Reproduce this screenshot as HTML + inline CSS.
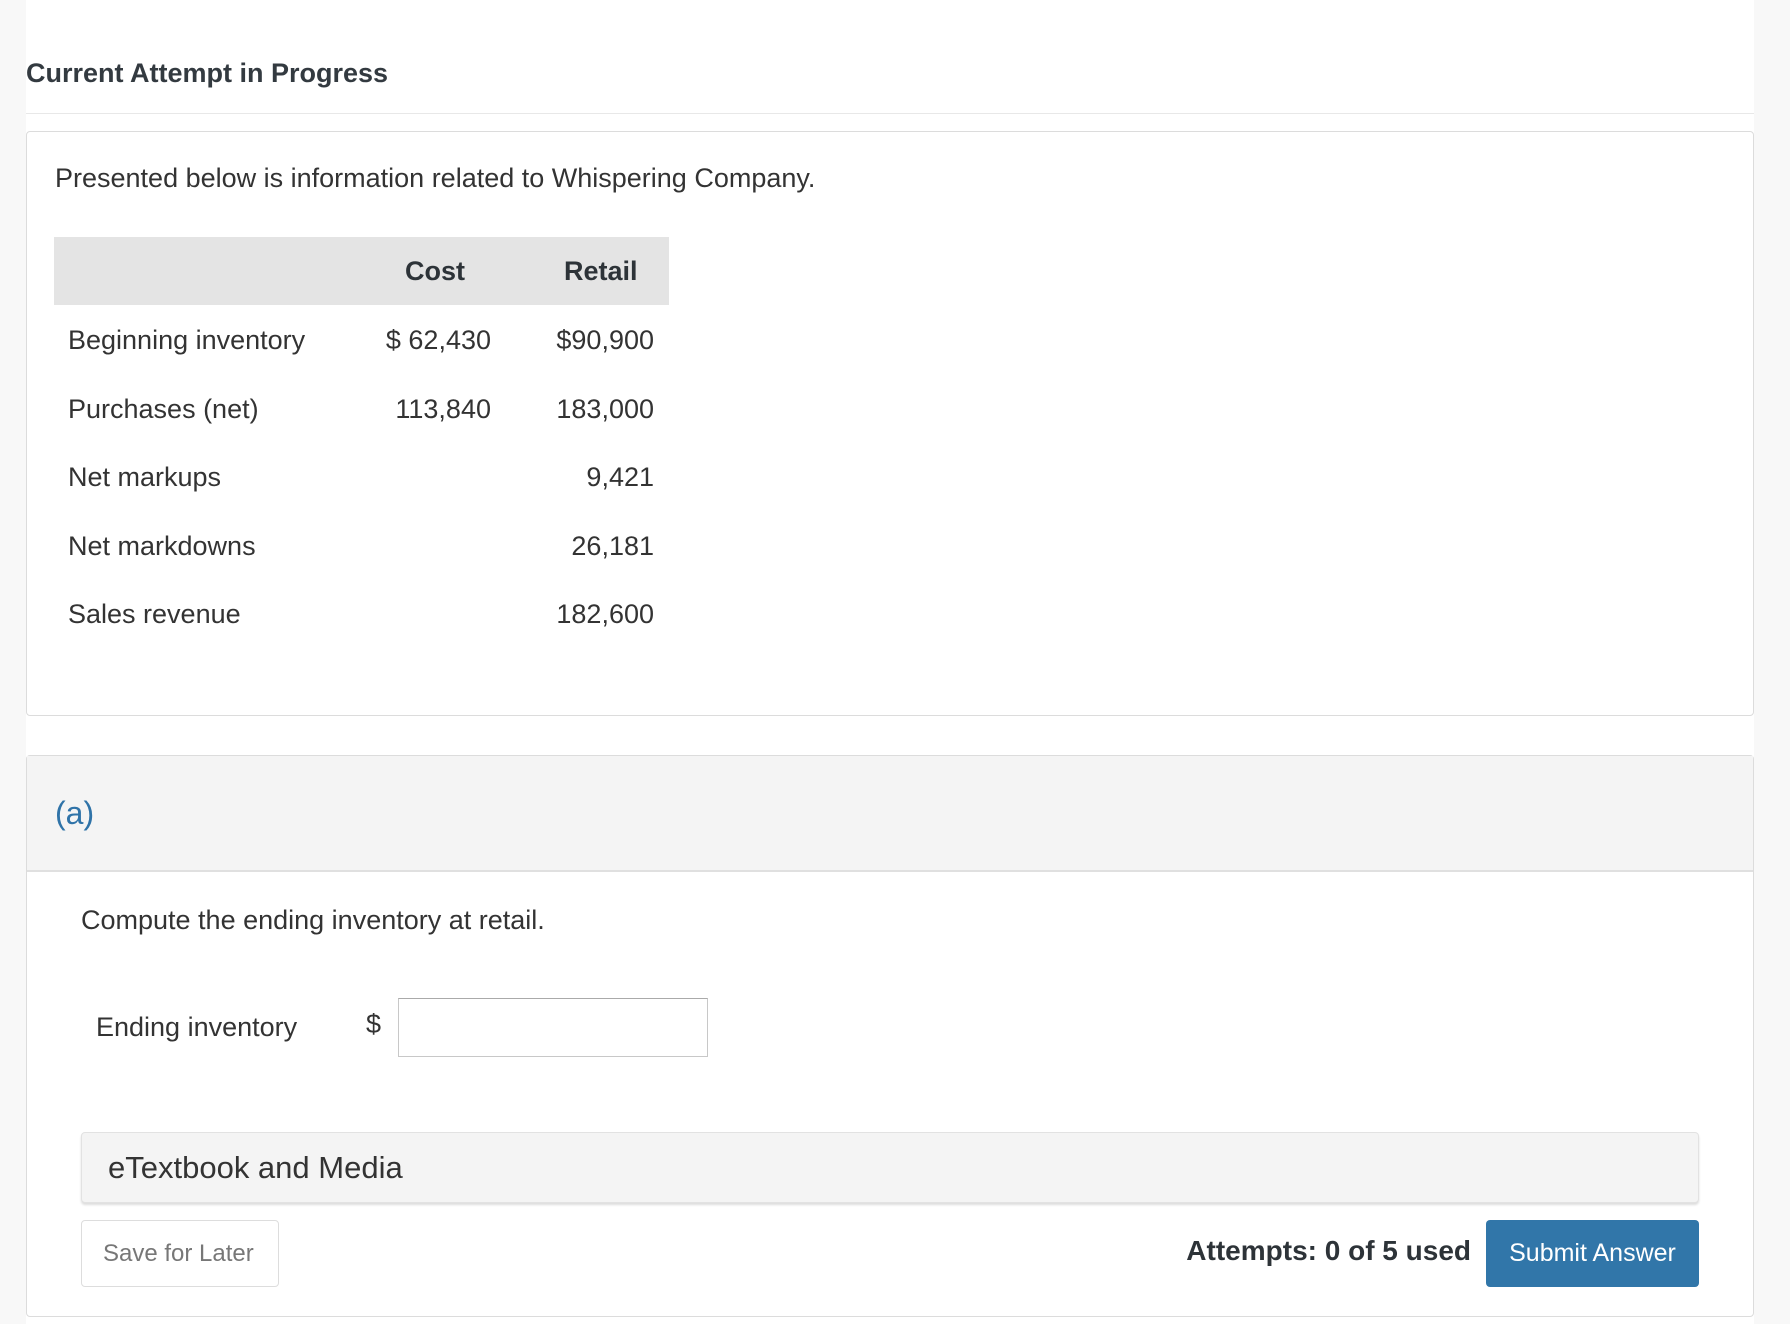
<!DOCTYPE html>
<html><head><style>
body{margin:0;width:1790px;height:1324px;background:#f8f8f8;font-family:"Liberation Sans",sans-serif;color:#2d3338;position:relative;overflow:hidden}
.main{position:absolute;left:26px;top:0;width:1728px;height:1324px;background:#fff}
.a{position:absolute;white-space:nowrap}
</style></head><body>
<div class="main"></div>
<div class="a" style="left:26px;top:58px;font-size:27px;font-weight:bold;color:#333a40">Current Attempt in Progress</div>
<div class="a" style="left:26px;top:113px;width:1728px;height:1px;background:#e8e8e8"></div>
<div class="a" style="left:26px;top:131px;width:1726px;height:583px;border:1px solid #dcdcdc;border-radius:4px"></div>
<div class="a" style="left:55px;top:163px;font-size:27px;color:#333">Presented below is information related to Whispering Company.</div>
<div class="a" style="left:54px;top:237px;width:615px;height:68px;background:#e4e4e4"></div>
<div class="a" style="left:405px;top:256px;font-size:27px;font-weight:bold">Cost</div>
<div class="a" style="left:564px;top:256px;font-size:27px;font-weight:bold">Retail</div>
<div style="position:absolute;left:68px;top:306px;font-size:27px;color:#333;line-height:68.5px">
Beginning inventory<br>Purchases (net)<br>Net markups<br>Net markdowns<br>Sales revenue</div>
<div style="position:absolute;right:1299px;top:306px;font-size:27px;color:#333;line-height:68.5px;text-align:right">$ 62,430<br>113,840</div>
<div style="position:absolute;right:1136px;top:306px;font-size:27px;color:#333;line-height:68.5px;text-align:right">$90,900<br>183,000<br>9,421<br>26,181<br>182,600</div>
<div class="a" style="left:26px;top:755px;width:1726px;height:560px;border:1px solid #dcdcdc;border-radius:4px"></div>
<div class="a" style="left:27px;top:756px;width:1726px;height:114px;background:#f4f4f4;border-bottom:2px solid #e0e0e0"></div>
<div class="a" style="left:55px;top:795px;font-size:32px;color:#2f73a8">(a)</div>
<div class="a" style="left:81px;top:905px;font-size:27px;color:#333">Compute the ending inventory at retail.</div>
<div class="a" style="left:96px;top:1012px;font-size:27px;color:#333">Ending inventory</div>
<div class="a" style="left:366px;top:1009px;font-size:27px;color:#333">$</div>
<div class="a" style="left:398px;top:998px;width:308px;height:57px;border:1px solid #c8c8c8;border-top-color:#aaa"></div>
<div class="a" style="left:81px;top:1132px;width:1616px;height:69px;background:#f4f4f4;border:1px solid #e2e2e2;border-radius:4px;box-shadow:0 2px 2px #ddd"></div>
<div class="a" style="left:108px;top:1150px;font-size:31px;color:#333">eTextbook and Media</div>
<div class="a" style="left:81px;top:1220px;width:196px;height:65px;border:1px solid #ddd;border-radius:4px"></div>
<div class="a" style="left:103px;top:1240px;font-size:24px;color:#777">Save for Later</div>
<div class="a" style="right:319px;top:1235px;font-size:28px;font-weight:bold;color:#2d3338">Attempts: 0 of 5 used</div>
<div class="a" style="left:1486px;top:1220px;width:213px;height:67px;background:#3176a9;border-radius:4px;color:#fff;font-size:25px;text-align:center;line-height:67px">Submit Answer</div>
</body></html>
